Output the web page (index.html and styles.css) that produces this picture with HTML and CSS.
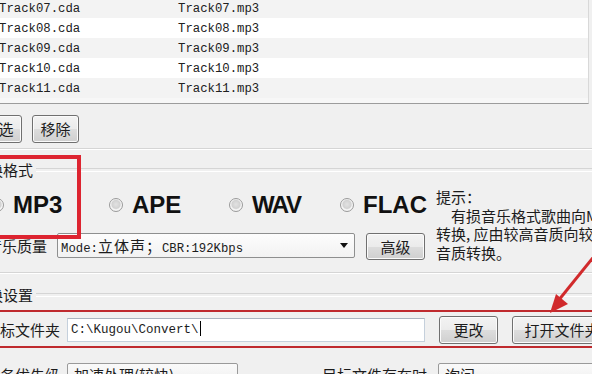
FILE: index.html
```html
<!DOCTYPE html>
<html lang="zh-CN">
  <head>
    <meta charset="UTF-8" />
    <meta name="viewport" content="width=device-width, initial-scale=1.0" />
    <title>格式转换</title>
    <link rel="stylesheet" href="styles.css">
  </head>
  <body>
    <div class="dlg">
      <!-- track list -->
      <div class="list">
        <div class="row"><span class="c1">Track07.cda</span><span>Track07.mp3</span></div>
        <div class="row"><span class="c1">Track08.cda</span><span>Track08.mp3</span></div>
        <div class="row"><span class="c1">Track09.cda</span><span>Track09.mp3</span></div>
        <div class="row"><span class="c1">Track10.cda</span><span>Track10.mp3</span></div>
        <div class="row"><span class="c1">Track11.cda</span><span>Track11.mp3</span></div>
      </div>

      <div class="actions">
        <button class="btn">全选</button>
        <button class="btn">移除</button>
      </div>

      <div class="sep"></div>

      <!-- format group -->
      <div class="group-head"><span>转换格式</span></div>
      <div class="format-body">
        <div class="format-left">
          <div class="formats">
            <label class="opt opt-mp3"><span class="radio"></span>MP3</label>
            <label class="opt opt-ape"><span class="radio"></span>APE</label>
            <label class="opt opt-wav"><span class="radio"></span>WAV</label>
            <label class="opt"><span class="radio"></span>FLAC</label>
          </div>
          <div class="quality">
            <span class="label">音乐质量</span>
            <div class="select">
              <span>Mode:<span class="cjk">立体声；</span>CBR:192Kbps</span>
              <span class="caret-down"></span>
            </div>
            <button class="btn btn-adv">高级</button>
          </div>
        </div>
        <div class="hint">
          <div>提示：</div>
          <div class="indent">有损音乐格式歌曲向MP3格式</div>
          <div>转换, 应由较高音质向较低</div>
          <div>音质转换。</div>
        </div>
      </div>

      <div class="sep sep-low"></div>

      <!-- settings group -->
      <div class="group-head group-head-2"><span>转换设置</span></div>
      <div class="target">
        <span class="label label-5">目标文件夹</span>
        <div class="input">C:\Kugou\Convert\<span class="text-caret"></span></div>
        <button class="btn btn-change">更改</button>
        <button class="btn btn-open">打开文件夹</button>
      </div>

      <div class="bottom">
        <span class="label label-5">任务优先级</span>
        <div class="combo combo-speed">加速处理(较快)</div>
        <span class="label label-exist">目标文件存在时</span>
        <div class="combo combo-ask">询问</div>
      </div>

      <!-- annotations -->
      <div class="mark mark-mp3"></div>
      <div class="mark mark-folder"></div>
      <svg class="arrow" width="592" height="374" viewBox="0 0 592 374">
        <line x1="600" y1="249" x2="558" y2="301" stroke="#d12a2c" stroke-width="3" />
        <polygon points="550,313 556,294 568,304" fill="#d12a2c" />
      </svg>
    </div>
  </body>
</html>
```

FILE: styles.css
```css
* {
  box-sizing: border-box;
}
body {
  margin: 0;
  background: #f0f0f0;
  font-family: "Noto Sans CJK SC", "Noto Sans", sans-serif;
  font-size: 15px;
  color: #1c1c1c;
  overflow: hidden;
}
.dlg {
  position: relative;
  width: 592px;
  height: 374px;
  overflow: hidden;
}

/* list ---------------------------------------------------------------- */
.list {
  margin-top: -2px;
  height: 106px;
  padding-bottom: 5px;
  border-bottom: 1px solid #9c9c9c;
  border-right: 1px solid #d8d8d8;
  width: 589px;
  background: #f7f7f7;
  font-family: "Liberation Mono", monospace;
  font-size: 12.3px;
  color: #202020;
}
.row {
  display: flex;
  height: 20px;
  padding-top: 3px;
  line-height: 17px;
  background: #f3f3f3;
}
.row:nth-child(even) {
  background: #ffffff;
}
.c1 {
  width: 179px;
  margin-left: -1px;
}

/* buttons ------------------------------------------------------------- */
.btn {
  flex: none;
  font-family: "Noto Sans CJK SC", sans-serif;
  font-size: 15px;
  color: #1c1c1c;
  height: 28px;
  padding: 0;
  border: 1px solid #707070;
  border-radius: 3px;
  background: linear-gradient(#f3f3f3 0%, #ebebeb 50%, #dddddd 51%, #cfcfcf 100%);
  box-shadow: inset 0 0 0 1px #fbfbfb;
  line-height: 24px;
  white-space: nowrap;
}
.actions {
  display: flex;
  gap: 10px;
  margin-top: 11px;
  margin-left: -25px;
}
.actions .btn {
  width: 47px;
}

.sep {
  margin-top: 5px;
  height: 2px;
  border-top: 1px solid #d5d5d5;
  border-bottom: 1px solid #ffffff;
}
.sep-low {
  margin-top: 2px;
}

.group-head {
  display: flex;
  align-items: center;
  margin-top: 12px;
  margin-left: -27px;
  height: 16px;
  line-height: 16px;
}
.group-head::after {
  content: "";
  flex: 1;
  height: 2px;
  margin-left: 3px;
  border-top: 1px solid #d5d5d5;
  border-bottom: 1px solid #ffffff;
}
.group-head-2 {
  margin-top: 13px;
}

/* format group -------------------------------------------------------- */
.format-body {
  display: flex;
  height: 92px;
}
.format-left {
  width: 436px;
  flex: none;
}
.formats {
  display: flex;
  align-items: center;
  margin-top: 14px;
  margin-left: -10px;
  height: 26px;
  font-family: "Liberation Sans", Arial, sans-serif;
  font-weight: 700;
  font-size: 24px;
  color: #111;
  white-space: nowrap;
}
.opt {
  display: flex;
  align-items: center;
  gap: 9px;
  flex: none;
}
.opt-mp3 {
  width: 119px;
}
.opt-ape {
  width: 120px;
}
.opt-wav {
  width: 111px;
  letter-spacing: -1.5px;
}
.radio {
  flex: none;
  width: 14px;
  height: 14px;
  border-radius: 50%;
  border: 1px solid #9a9a9a;
  background: radial-gradient(circle at 50% 45%, #e2e2e2 0%, #d2d2d2 45%, #f6f6f6 60%, #eaeaea 100%);
}

.quality {
  display: flex;
  align-items: flex-start;
  margin-top: 15px;
  margin-left: -13px;
  height: 27px;
}
.label {
  flex: none;
  width: 60px;
  white-space: nowrap;
  line-height: 24px;
}
.quality .label {
  line-height: 25px;
}
.select {
  flex: none;
  display: flex;
  align-items: center;
  justify-content: space-between;
  margin-left: 10px;
  width: 298px;
  height: 25px;
  padding: 0 6px 0 3px;
  border: 1px solid #8e8f8f;
  border-radius: 2px;
  background: linear-gradient(#fdfdfd, #f2f2f2);
  font-family: "Liberation Mono", monospace;
  font-size: 12.3px;
  white-space: nowrap;
}
.cjk {
  font-family: "Noto Sans CJK SC", sans-serif;
  font-size: 15px;
  letter-spacing: 1px;
}
.caret-down {
  width: 0;
  height: 0;
  border-left: 4px solid transparent;
  border-right: 4px solid transparent;
  border-top: 5px solid #111;
}
.btn-adv {
  margin-left: 11px;
  width: 59px;
  height: 27px;
}
.hint {
  padding-top: 10px;
  white-space: nowrap;
}
.hint div {
  height: 18.5px;
  line-height: 18px;
}
.hint .indent {
  padding-left: 15px;
}

/* settings group ------------------------------------------------------ */
.target {
  display: flex;
  align-items: center;
  margin-top: 13px;
  margin-left: -15px;
  height: 28px;
}
.label-5 {
  width: 75px;
}
.input {
  flex: none;
  margin-left: 7px;
  width: 358px;
  height: 24px;
  padding-left: 3px;
  border: 1px solid #c5d0dc;
  border-top-color: #abb4c0;
  background: #fff;
  font-family: "Liberation Mono", monospace;
  font-size: 12.5px;
  line-height: 22px;
  white-space: nowrap;
}
.text-caret {
  display: inline-block;
  width: 1px;
  height: 15px;
  margin-left: 1px;
  vertical-align: -3px;
  background: #000;
}
.btn-change {
  margin-left: 14px;
  width: 59px;
}
.btn-open {
  margin-left: 14px;
  width: 100px;
}

.bottom {
  display: flex;
  align-items: flex-start;
  margin-top: 19px;
  margin-left: -15px;
}
.bottom .label {
  line-height: 23px;
}
.combo {
  flex: none;
  height: 23px;
  padding-left: 6px;
  border: 1px solid #9a9a9a;
  border-radius: 2px;
  background: linear-gradient(#fafafa, #eeeeee);
  line-height: 21px;
  white-space: nowrap;
}
.combo-speed {
  margin-left: 7px;
  width: 171px;
}
.label-exist {
  width: 108px;
  margin-left: 84px;
}
.combo-ask {
  margin-left: 8px;
  width: 170px;
}

/* annotations --------------------------------------------------------- */
.mark {
  position: absolute;
  pointer-events: none;
}
.mark-mp3 {
  left: -20px;
  top: 155px;
  width: 101px;
  height: 84px;
  border: 4px solid #dd2430;
}
.mark-folder {
  left: -10px;
  right: -10px;
  top: 310px;
  height: 38px;
  border: 2px solid #bf2a2e;
}
.arrow {
  position: absolute;
  left: 0;
  top: 0;
  pointer-events: none;
}
```
